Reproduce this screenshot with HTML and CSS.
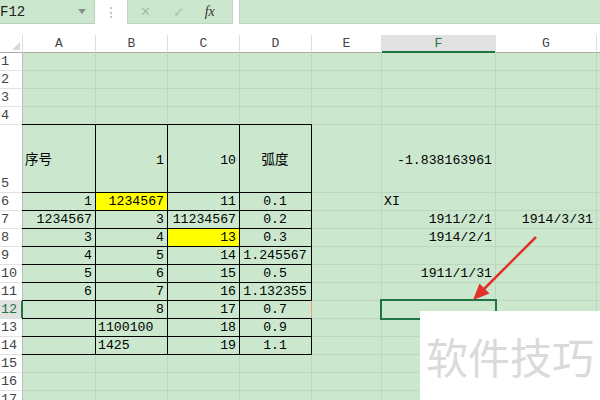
FILE: index.html
```html
<!DOCTYPE html>
<html lang="zh-CN">

<head>
    <meta charset="UTF-8">
    <title>工作表</title>
    <link rel="stylesheet" href="styles.css">
</head>

<body>
    <div class="topbar">
        <div class="namebox"><span>F12</span><span class="caret"></span></div>
        <div class="grip"><span></span></div>
        <div class="fxbtns">
            <span class="btn-x">✕</span>
            <span class="btn-ok">✓</span>
            <span class="btn-fx">fx</span>
        </div>
        <div class="formula"></div>
    </div>

    <div class="sheet">
        <!-- 列标 -->
        <div class="ch corner"><span></span></div>
        <div class="ch">A</div>
        <div class="ch">B</div>
        <div class="ch">C</div>
        <div class="ch">D</div>
        <div class="ch">E</div>
        <div class="ch on">F</div>
        <div class="ch">G</div>
        <div class="ch"></div>

        <!-- 1-4 -->
        <div class="rh">1</div>
        <div class="c"></div><div class="c"></div><div class="c"></div><div class="c"></div>
        <div class="c"></div><div class="c"></div><div class="c"></div><div class="c"></div>
        <div class="rh">2</div>
        <div class="c"></div><div class="c"></div><div class="c"></div><div class="c"></div>
        <div class="c"></div><div class="c"></div><div class="c"></div><div class="c"></div>
        <div class="rh">3</div>
        <div class="c"></div><div class="c"></div><div class="c"></div><div class="c"></div>
        <div class="c"></div><div class="c"></div><div class="c"></div><div class="c"></div>
        <div class="rh">4</div>
        <div class="c"></div><div class="c"></div><div class="c"></div><div class="c"></div>
        <div class="c"></div><div class="c"></div><div class="c"></div><div class="c"></div>

        <!-- 5 -->
        <div class="rh">5</div>
        <div class="c b v5 cjk">序号</div>
        <div class="c b v5 r">1</div>
        <div class="c b v5 r">10</div>
        <div class="c b v5 m cjk">弧度</div>
        <div class="c"></div>
        <div class="c v5 r">-1.838163961</div>
        <div class="c"></div><div class="c"></div>

        <!-- 6 -->
        <div class="rh">6</div>
        <div class="c b r">1</div>
        <div class="c b r y">1234567</div>
        <div class="c b r">11</div>
        <div class="c b m">0.1</div>
        <div class="c"></div>
        <div class="c">XI</div>
        <div class="c"></div><div class="c"></div>

        <!-- 7 -->
        <div class="rh">7</div>
        <div class="c b r">1234567</div>
        <div class="c b r">3</div>
        <div class="c b r">11234567</div>
        <div class="c b m">0.2</div>
        <div class="c"></div>
        <div class="c r">1911/2/1</div>
        <div class="c r">1914/3/31</div>
        <div class="c"></div>

        <!-- 8 -->
        <div class="rh">8</div>
        <div class="c b r">3</div>
        <div class="c b r">4</div>
        <div class="c b r y">13</div>
        <div class="c b m">0.3</div>
        <div class="c"></div>
        <div class="c r">1914/2/1</div>
        <div class="c"></div><div class="c"></div>

        <!-- 9 -->
        <div class="rh">9</div>
        <div class="c b r">4</div>
        <div class="c b r">5</div>
        <div class="c b r">14</div>
        <div class="c b m">1.245567</div>
        <div class="c"></div><div class="c"></div><div class="c"></div><div class="c"></div>

        <!-- 10 -->
        <div class="rh">10</div>
        <div class="c b r">5</div>
        <div class="c b r">6</div>
        <div class="c b r">15</div>
        <div class="c b m">0.5</div>
        <div class="c"></div>
        <div class="c r">1911/1/31</div>
        <div class="c"></div><div class="c"></div>

        <!-- 11 -->
        <div class="rh">11</div>
        <div class="c b r">6</div>
        <div class="c b r">7</div>
        <div class="c b r">16</div>
        <div class="c b m">1.132355</div>
        <div class="c"></div><div class="c"></div><div class="c"></div><div class="c"></div>

        <!-- 12 -->
        <div class="rh on">12</div>
        <div class="c b"></div>
        <div class="c b r">8</div>
        <div class="c b r">17</div>
        <div class="c b m copy">0.7</div>
        <div class="c"></div>
        <div class="c sel"></div>
        <div class="c"></div><div class="c"></div>

        <!-- 13 -->
        <div class="rh">13</div>
        <div class="c b"></div>
        <div class="c b">1100100</div>
        <div class="c b r">18</div>
        <div class="c b m">0.9</div>
        <div class="c"></div><div class="c"></div><div class="c"></div><div class="c"></div>

        <!-- 14 -->
        <div class="rh">14</div>
        <div class="c b"></div>
        <div class="c b">1425</div>
        <div class="c b r">19</div>
        <div class="c b m">1.1</div>
        <div class="c"></div><div class="c"></div><div class="c"></div><div class="c"></div>

        <!-- 15-17 -->
        <div class="rh">15</div>
        <div class="c"></div><div class="c"></div><div class="c"></div><div class="c"></div>
        <div class="c"></div><div class="c"></div><div class="c"></div><div class="c"></div>
        <div class="rh">16</div>
        <div class="c"></div><div class="c"></div><div class="c"></div><div class="c"></div>
        <div class="c"></div><div class="c"></div><div class="c"></div><div class="c"></div>
        <div class="rh">17</div>
        <div class="c"></div><div class="c"></div><div class="c"></div><div class="c"></div>
        <div class="c"></div><div class="c"></div><div class="c"></div><div class="c"></div>
    </div>

    <!-- 红色箭头 -->
    <svg class="arrow" width="600" height="400" viewBox="0 0 600 400">
        <line x1="536" y1="237" x2="484" y2="289" stroke="#e0312b" stroke-width="2.5" />
        <polygon points="473,300 489.5,293.5 479.5,283.5" fill="#e0312b" />
    </svg>

    <div class="watermark">软件技巧</div>
</body>

</html>
```

FILE: styles.css
```css
body {
    margin: 0;
    padding: 0;
    width: 600px;
    height: 400px;
    overflow: hidden;
    position: relative;
    background-color: #fff;
    font-family: "Liberation Mono", "Noto Sans CJK SC", monospace;
}

/* 编辑栏 */
.topbar {
    display: flex;
    height: 24px;
    margin-bottom: 11px;
}

.namebox {
    width: 95px;
    box-sizing: border-box;
    display: flex;
    justify-content: space-between;
    align-items: center;
    padding-right: 8px;
    background-color: #cbe8cf;
    border-right: 1px solid #bccfbf;
    border-bottom: 1px solid #bccfbf;
    font-size: 14px;
    color: #222;
}

.caret {
    border-left: 4px solid transparent;
    border-right: 4px solid transparent;
    border-top: 5px solid #8c8c8c;
}

.grip {
    width: 32px;
    display: flex;
    justify-content: center;
    align-items: center;
}

.grip span {
    height: 11px;
    border-left: 2px dotted #c4c4c4;
}

.fxbtns {
    width: 106px;
    box-sizing: border-box;
    margin-right: 6px;
    display: flex;
    align-items: center;
    background-color: #cbe8cf;
    border: 1px solid #c2d2c4;
    border-top: none;
    font-family: "DejaVu Sans", sans-serif;
}

.btn-x {
    margin-left: 12px;
    font-size: 13px;
    color: #a9bcab;
}

.btn-ok {
    margin-left: 22px;
    font-size: 14px;
    color: #a9c2ad;
}

.btn-fx {
    margin-left: 20px;
    font-family: "Liberation Serif", serif;
    font-style: italic;
    font-size: 14px;
    color: #333;
}

.formula {
    flex: 1;
    background-color: #cbe8cf;
    border: 1px solid #c2d2c4;
    border-top: none;
    border-right: none;
}

/* 表格区域 */
.sheet {
    display: grid;
    grid-template-columns: 22px 72px 71px 71px 71px 69px 113px 100px 1fr;
    grid-template-rows: 17px repeat(4, 17px) 67px repeat(12, 17px);
    gap: 1px;
    background-color: #bcd6c0;
}

.ch {
    background-color: #fff;
    box-shadow: 1px 0 0 #dedede, 0 1px 0 #a9a9a9;
    text-align: center;
    line-height: 17px;
    font-size: 13px;
    color: #444;
}

.ch.on {
    background-color: #e1e1e1;
    color: #217346;
    box-shadow: inset 0 -1px 0 #217346, 0 1px 0 #217346, 1px 0 0 #dedede;
}

.corner {
    display: flex;
    justify-content: flex-end;
    align-items: flex-end;
    padding: 0 2px 2px 0;
}

.corner span {
    border-left: 8px solid transparent;
    border-bottom: 8px solid #d8d8d8;
}

.rh {
    position: relative;
    display: flex;
    align-items: flex-end;
    padding-left: 1px;
    background-color: #fff;
    box-shadow: 1px 0 0 #bdbdbd, 0 1px 0 #e2e2e2;
    line-height: 17px;
    font-size: 13.5px;
    color: #444;
}

.rh.on {
    background-color: #e1e1e1;
    color: #217346;
    box-shadow: inset -1px 0 0 #217346, 1px 0 0 #217346, 0 1px 0 #e2e2e2;
}

.c {
    display: flex;
    align-items: flex-end;
    padding: 0 3px 0 2px;
    background-color: #cbe8cf;
    white-space: nowrap;
    line-height: 17px;
    font-size: 13.2px;
    color: #000;
}

.r {
    justify-content: flex-end;
}

.m {
    justify-content: center;
}

.v5 {
    align-items: center;
    padding-top: 3px;
}

.cjk {
    font-size: 13.5px;
}

.b {
    box-shadow: 0 0 0 1px #000;
}

.y {
    background-color: #ffff00;
}

/* D12 右侧的复制虚线标记 */
.copy {
    box-shadow: 1px 0 0 #f0a080, 0 0 0 1px #000;
}

.sel {
    position: relative;
    z-index: 1;
    outline: 2px solid #217346;
}

/* 覆盖层 */
.arrow {
    position: absolute;
    left: 0;
    top: 0;
    pointer-events: none;
    z-index: 2;
}

.watermark {
    position: absolute;
    left: 420px;
    top: 311px;
    width: 180px;
    height: 89px;
    display: flex;
    justify-content: center;
    align-items: center;
    background-color: #fff;
    font-family: "Noto Sans CJK SC", sans-serif;
    font-size: 42px;
    color: #dadada;
    z-index: 3;
}
```
